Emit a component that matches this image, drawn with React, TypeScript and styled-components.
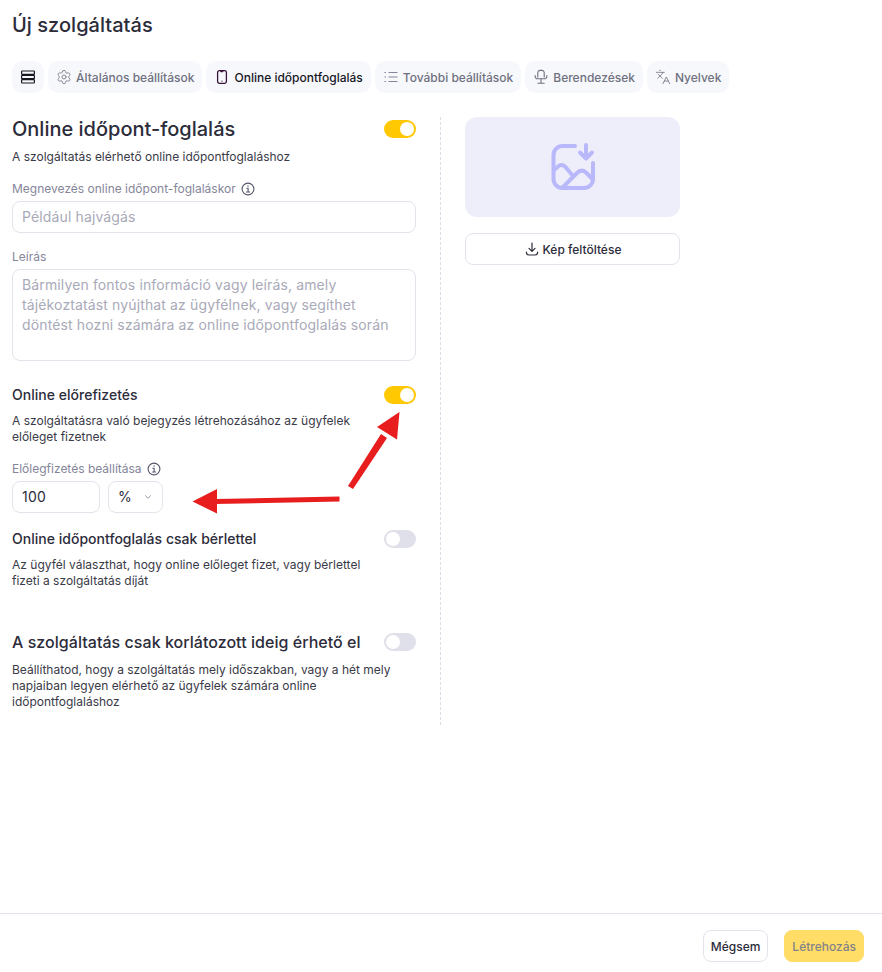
import React from "react"
import styled, { createGlobalStyle } from "styled-components"
import { ChevronDown, Languages, Settings } from "lucide-react"

const GlobalStyle = createGlobalStyle`
  html, body {
    margin: 0;
    padding: 0;
    background: #fff;
  }
  body {
    font-family: Inter, "Liberation Sans", sans-serif;
    color: #2c2c3a;
  }
  * {
    box-sizing: border-box;
  }
`

const Page = styled.div`
  position: relative;
  width: 882px;
  height: 972px;
  display: flex;
  flex-direction: column;
  overflow: hidden;
`
const Main = styled.div`
  flex: 1;
  padding: 13px 12px 0;
`
const Title = styled.h1`
  margin: 0;
  height: 24px;
  font-size: 20px;
  line-height: 24px;
  font-weight: 500;
  letter-spacing: 0.03px;
  color: #2c2c3a;
`
const Tabs = styled.div`
  display: flex;
  gap: 4px;
  margin-top: 24px;
`
const Tab = styled.div<{ $active?: boolean }>`
  height: 32px;
  padding: 0 8px;
  display: flex;
  align-items: center;
  gap: 4px;
  border-radius: 10px;
  background: #f7f8fc;
  font-size: 12px;
  font-weight: 500;
  white-space: nowrap;
  color: ${p => (p.$active ? "#17171f" : "#6f7180")};
`
const Columns = styled.div`
  display: flex;
  margin-top: 24px;
`
const LeftColumn = styled.div`
  width: 429px;
  height: 608px;
  padding-right: 24px;
  border-right: 1px dashed #dcdce6;
`
const RightColumn = styled.div`
  width: 215px;
  margin-left: 24px;
`
const ToggleRow = styled.div<{ $top?: number }>`
  display: flex;
  justify-content: space-between;
  align-items: center;
  margin-top: ${p => p.$top ?? 0}px;
`
const Heading = styled.h2<{ $size?: number }>`
  margin: 0;
  font-size: ${p => p.$size ?? 20}px;
  line-height: 24px;
  font-weight: 500;
  letter-spacing: ${p => (p.$size ? 0.04 : 0)}px;
  color: #2c2c3a;
`
const SubHeading = styled.h3`
  margin: 0;
  font-size: 14px;
  line-height: 18px;
  font-weight: 500;
  letter-spacing: 0.02px;
  color: #2c2c3a;
`
const Switch = styled.div<{ $on?: boolean }>`
  width: 32px;
  height: 18px;
  padding: 2px;
  border-radius: 9px;
  display: flex;
  flex-shrink: 0;
  justify-content: ${p => (p.$on ? "flex-end" : "flex-start")};
  background: ${p => (p.$on ? "#ffc800" : "#dfe0ea")};
  &::after {
    content: "";
    width: 14px;
    height: 14px;
    border-radius: 50%;
    background: #fff;
  }
`
const Help = styled.p<{ $top?: number; $full?: boolean }>`
  margin: ${p => p.$top ?? 9}px 0 0;
  width: ${p => (p.$full ? "100%" : "372px")};
  font-size: 12px;
  line-height: 16px;
  color: #3a3a48;
`
const Label = styled.div<{ $top: number }>`
  display: flex;
  align-items: center;
  gap: 5px;
  margin-top: ${p => p.$top}px;
  height: 16px;
  font-size: 12px;
  line-height: 16px;
  color: #85869a;
`
const Field = styled.div<{ $filled?: boolean }>`
  height: 32px;
  margin-top: 4px;
  padding: 0 9px 1px;
  display: flex;
  align-items: center;
  border: 1px solid #e3e3ec;
  border-radius: 8px;
  font-size: 14px;
  letter-spacing: 0.13px;
  color: ${p => (p.$filled ? "#2c2c3a" : "#a9aab8")};
`
const TextArea = styled(Field)`
  height: 92px;
  padding: 5px 9px;
  align-items: flex-start;
  line-height: 20px;
`
const AmountRow = styled.div`
  display: flex;
  gap: 8px;
`
const AmountField = styled(Field)`
  width: 88px;
  letter-spacing: 0.2px;
`
const UnitField = styled(Field)`
  width: 55px;
  gap: 11px;
  color: #2c2c3a;
  svg {
    color: #55566a;
  }
`
const ImageBox = styled.div`
  height: 100px;
  border-radius: 12px;
  background: #eeeefb;
  display: flex;
  align-items: center;
  justify-content: center;
`
const Button = styled.div`
  height: 32px;
  margin-top: 16px;
  border: 1px solid #e3e3ec;
  border-radius: 8px;
  display: flex;
  align-items: center;
  justify-content: center;
  gap: 3px;
  font-size: 12px;
  font-weight: 500;
  color: #2c2c3a;
`
const Footer = styled.div`
  height: 59px;
  border-top: 1px solid #e3e3ec;
  padding-top: 16px;
  padding-right: 18px;
  display: flex;
  justify-content: flex-end;
  gap: 16px;
`
const FooterButton = styled.div<{ $primary?: boolean }>`
  height: 32px;
  padding: 0 7px;
  border-radius: 8px;
  border: 1px solid ${p => (p.$primary ? "#ffdd66" : "#e3e3ec")};
  background: ${p => (p.$primary ? "#ffdd66" : "#fff")};
  display: flex;
  align-items: center;
  font-size: 12px;
  font-weight: 500;
  color: ${p => (p.$primary ? "#85838a" : "#2c2c3a")};
`
const Annotation = styled.svg`
  position: absolute;
  left: 0;
  top: 0;
  pointer-events: none;
`

function StackIcon() {
  return (
    <svg width="16" height="16" viewBox="0 0 16 16" fill="none" stroke="#17171f" strokeWidth="1.2">
      <rect x="1.6" y="2" width="12.8" height="3.4" rx="0.7" />
      <rect x="1.6" y="6.3" width="12.8" height="3.4" rx="0.7" />
      <rect x="1.6" y="10.6" width="12.8" height="3.4" rx="0.7" />
    </svg>
  )
}

function PhoneIcon() {
  return (
    <svg width="16" height="16" viewBox="0 0 16 16" fill="none" stroke="#3a1438" strokeWidth="1.3" strokeLinecap="round">
      <rect x="3.6" y="1.7" width="8.8" height="12.6" rx="1.8" />
      <path d="M7 1.8h2v1H7z" fill="#3a1438" strokeWidth="0.8" />
      <path d="M8 12.1h0.01" />
    </svg>
  )
}

function ListIcon() {
  return (
    <svg width="16" height="16" viewBox="0 0 16 16" fill="none" stroke="#85869a" strokeWidth="1.1">
      <path d="M5.500 3.500H14.500M5.500 8H14.500M5.500 12.500H14.500" />
      <path d="M1.500 3.500H3M1.500 8H3M1.500 12.500H3" />
    </svg>
  )
}

function ChairIcon() {
  return (
    <svg width="16" height="16" viewBox="0 0 16 16" fill="none" stroke="#6f7180" strokeWidth="1.1" strokeLinecap="round">
      <path d="M4.800 8V3.600a2.200 2.200 0 0 1 2.200-2.200h2a2.200 2.200 0 0 1 2.200 2.200V8" />
      <path d="M2.200 6.600v0.800A2.400 2.400 0 0 0 4.600 9.800h6.800a2.400 2.400 0 0 0 2.400-2.400v-0.800" />
      <path d="M8 9.800v4.200M4.800 14.200h6.400" />
    </svg>
  )
}

function ImageDownloadIcon() {
  return (
    <svg width="48" height="48" viewBox="0 0 48 48" fill="none" stroke="#b8b8fa" strokeWidth="4" strokeLinecap="round" strokeLinejoin="round">
      <path d="M26 3H13.500a9 9 0 0 0-9 9v24a9 9 0 0 0 9 9H35a9 9 0 0 0 9-9V20" />
      <path d="M5 27l4-3.500a5 5 0 0 1 7 0L24 33" />
      <path d="M13 45l15-15c3-3 6-3 9-0.500l7 7" />
      <path d="M37 2v13M31 9.500l6 6 6-6" />
    </svg>
  )
}

function InfoIcon() {
  return (
    <svg width="14" height="14" viewBox="0 0 14 14" fill="none" stroke="#55566a" strokeWidth="1.1" strokeLinecap="round">
      <circle cx="7" cy="7" r="5.900" />
      <path d="M5.800 6.300H7.100V10M5.600 10H8.600" />
      <path d="M7 4h0.010" strokeWidth="1.4" />
    </svg>
  )
}

function UploadIcon() {
  return (
    <svg width="16" height="16" viewBox="0 0 16 16" fill="none" stroke="#2c2c3a" strokeWidth="1.2" strokeLinecap="round" strokeLinejoin="round">
      <path d="M8 2v8M5 7.300L8 10.300l3-3" />
      <path d="M2.400 11.200c0 1.800 1.200 2.800 3 2.800h5.200c1.800 0 3-1 3-2.800" />
    </svg>
  )
}

export default function App() {
  return (
    <Page>
      <GlobalStyle />
      <Main>
        <Title>Új szolgáltatás</Title>
        <Tabs>
          <Tab $active>
            <StackIcon />
          </Tab>
          <Tab>
            <Settings size={16} strokeWidth={1.2} />
            Általános beállítások
          </Tab>
          <Tab $active>
            <PhoneIcon />
            Online időpontfoglalás
          </Tab>
          <Tab>
            <ListIcon />
            További beállítások
          </Tab>
          <Tab>
            <ChairIcon />
            Berendezések
          </Tab>
          <Tab>
            <Languages size={16} strokeWidth={1.2} />
            Nyelvek
          </Tab>
        </Tabs>
        <Columns>
          <LeftColumn>
            <ToggleRow>
              <Heading>Online időpont-foglalás</Heading>
              <Switch $on />
            </ToggleRow>
            <Help $top={8}>A szolgáltatás elérhető online időpontfoglaláshoz</Help>
            <Label $top={16}>
              Megnevezés online időpont-foglaláskor <InfoIcon />
            </Label>
            <Field>Például hajvágás</Field>
            <Label $top={16}>Leírás</Label>
            <TextArea>
              Bármilyen fontos információ vagy leírás, amely tájékoztatást nyújthat az ügyfélnek, vagy segíthet
              döntést hozni számára az online időpontfoglalás során
            </TextArea>
            <ToggleRow $top={25}>
              <SubHeading>Online előrefizetés</SubHeading>
              <Switch $on />
            </ToggleRow>
            <Help>A szolgáltatásra való bejegyzés létrehozásához az ügyfelek előleget fizetnek</Help>
            <Label $top={16}>
              Előlegfizetés beállítása <InfoIcon />
            </Label>
            <AmountRow>
              <AmountField $filled>100</AmountField>
              <UnitField>
                %
                <ChevronDown size={12} strokeWidth={1.5} />
              </UnitField>
            </AmountRow>
            <ToggleRow $top={17}>
              <SubHeading>Online időpontfoglalás csak bérlettel</SubHeading>
              <Switch />
            </ToggleRow>
            <Help>Az ügyfél választhat, hogy online előleget fizet, vagy bérlettel fizeti a szolgáltatás díját</Help>
            <ToggleRow $top={41}>
              <Heading as="h3" $size={16}>
                A szolgáltatás csak korlátozott ideig érhető el
              </Heading>
              <Switch />
            </ToggleRow>
            <Help $top={8} $full>
              Beállíthatod, hogy a szolgáltatás mely időszakban, vagy a hét mely napjaiban legyen elérhető az ügyfelek
              számára online időpontfoglaláshoz
            </Help>
          </LeftColumn>
          <RightColumn>
            <ImageBox>
              <ImageDownloadIcon />
            </ImageBox>
            <Button>
              <UploadIcon />
              Kép feltöltése
            </Button>
          </RightColumn>
        </Columns>
      </Main>
      <Footer>
        <FooterButton>Mégsem</FooterButton>
        <FooterButton $primary>Létrehozás</FooterButton>
      </Footer>
      <Annotation width="882" height="972" viewBox="0 0 882 972">
        <g fill="#e81e1e">
          <path d="M348 486L381 434L387 438L353 489Z" />
          <path d="M399.500 412L377 427L397 439.500Z" />
          <path d="M339.500 496.500L215 499L215 504L339.500 501.500Z" />
          <path d="M192.500 501.500L217 489L217 513.500Z" />
        </g>
      </Annotation>
    </Page>
  )
}
